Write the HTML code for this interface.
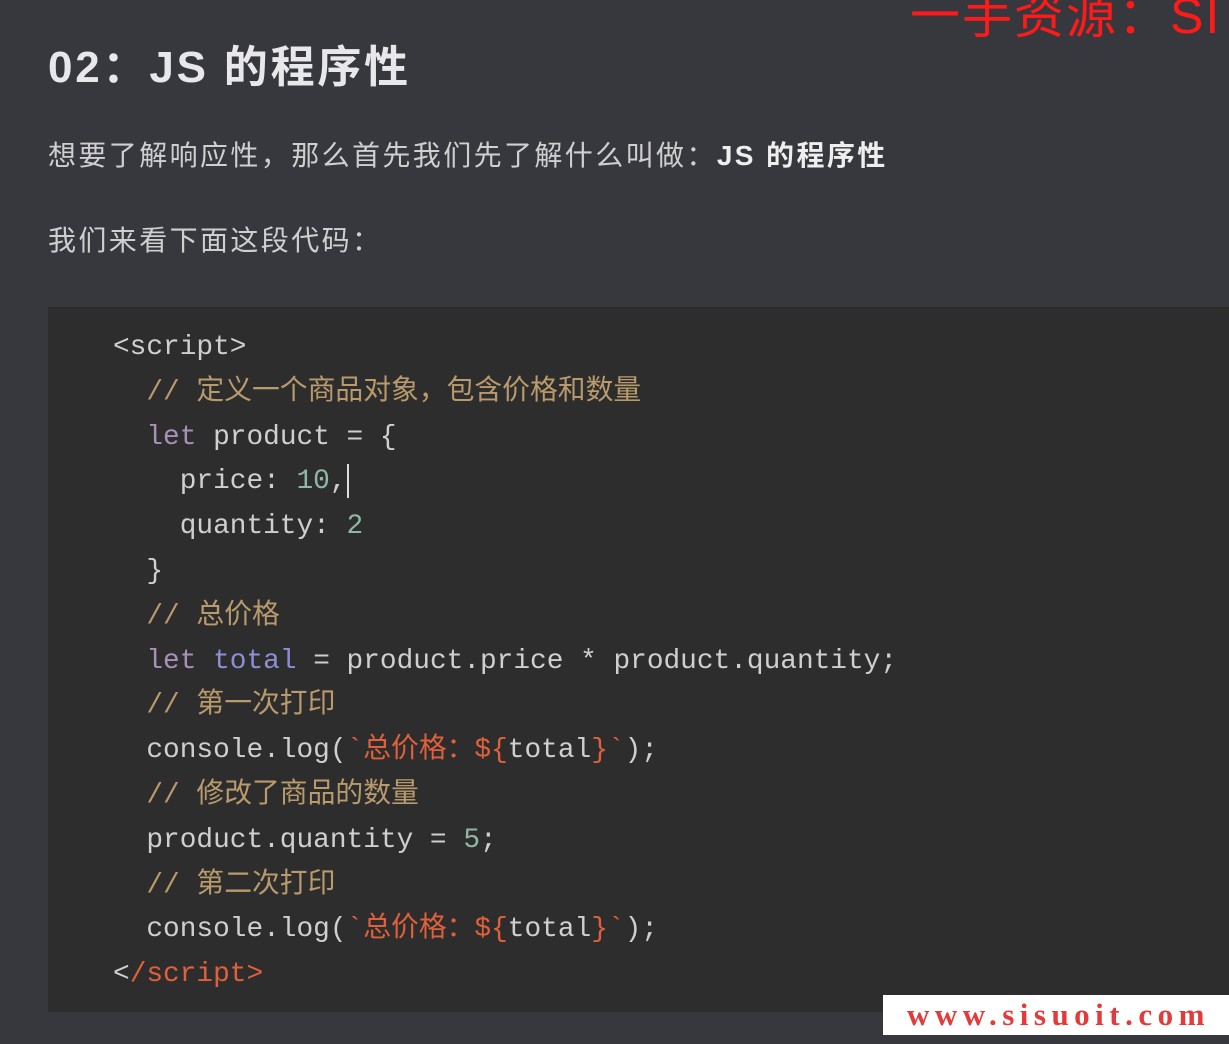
<!DOCTYPE html>
<html><head><meta charset="utf-8"><style>
html,body{margin:0;padding:0;width:1229px;height:1044px;overflow:hidden;background:#36383d;}
body{position:relative;font-family:"Liberation Sans","Noto Sans CJK SC",sans-serif;color:#d4d4d4;}
.h{position:absolute;left:48px;top:40px;font-size:44px;font-weight:bold;color:#e8e8ea;line-height:56px;white-space:nowrap;letter-spacing:2.8px;}
.p{position:absolute;left:48px;font-size:28px;line-height:36px;color:#cfcfcf;white-space:nowrap;letter-spacing:2.4px;}
.code{position:absolute;left:48px;top:307px;width:1181px;height:705px;background:#2d2d2d;}
pre{margin:0;position:absolute;left:65px;top:19px;font-family:"Liberation Mono","Noto Sans CJK SC",monospace;font-size:27.8px;line-height:44.8px;color:#cfcfcf;}
.c{color:#b99a6c}.k{color:#a88fb8}.v{color:#8c8fd6}.n{color:#8fb7a6}.s{color:#e0603c}
.wm{position:absolute;left:910px;top:-24px;font-size:50px;color:#ff1a1a;white-space:nowrap;letter-spacing:2px;}
.bx{position:absolute;left:883px;top:995px;width:346px;height:40px;background:#fff;}
.bx span{position:absolute;left:24px;top:2px;font-family:"Liberation Serif",serif;font-weight:bold;font-size:31px;color:#e33a3a;letter-spacing:5.5px;}
.cur{display:inline-block;width:2px;height:34px;background:#ddd;vertical-align:middle;}
</style></head><body>
<div class="wm">一手资源：SI</div>
<div class="h">02：JS 的程序性</div>
<div class="p" style="top:138px">想要了解响应性，那么首先我们先了解什么叫做：<b style="color:#eee">JS 的程序性</b></div>
<div class="p" style="top:223px">我们来看下面这段代码：</div>
<div class="code"><pre>&lt;script&gt;
  <span class="c">// 定义一个商品对象，包含价格和数量</span>
  <span class="k">let</span> product = {
    price: <span class="n">10</span>,<span class="cur"></span>
    quantity: <span class="n">2</span>
  }
  <span class="c">// 总价格</span>
  <span class="k">let</span> <span class="v">total</span> = product.price * product.quantity;
  <span class="c">// 第一次打印</span>
  console.log(<span class="s">`总价格：${</span>total<span class="s">}`</span>);
  <span class="c">// 修改了商品的数量</span>
  product.quantity = <span class="n">5</span>;
  <span class="c">// 第二次打印</span>
  console.log(<span class="s">`总价格：${</span>total<span class="s">}`</span>);
&lt;<span class="s">/script&gt;</span></pre></div>
<div class="bx"><span>www.sisuoit.com</span></div>
</body></html>
